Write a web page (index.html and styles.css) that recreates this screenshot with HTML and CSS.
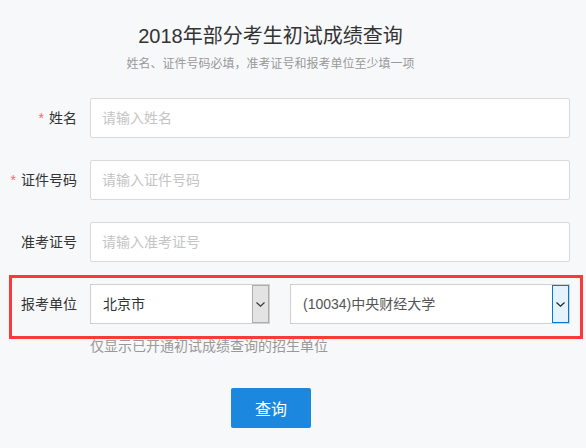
FILE: index.html
```html
<!DOCTYPE html>
<html lang="zh-CN">
<head>
  <meta charset="UTF-8">
  <meta name="viewport" content="width=device-width, initial-scale=1.0">
  <title>2018年部分考生初试成绩查询</title>
  <link rel="stylesheet" href="styles.css">
</head>
<body>
  <div class="page">
    <div class="head">
      <h1 class="title">2018年部分考生初试成绩查询</h1>
      <p class="subtitle">姓名、证件号码必填，准考证号和报考单位至少填一项</p>
    </div>

    <form class="form">
      <div class="row">
        <label class="label"><span class="req">*</span>姓名</label>
        <input class="field" type="text" placeholder="请输入姓名">
      </div>
      <div class="row">
        <label class="label"><span class="req">*</span>证件号码</label>
        <input class="field" type="text" placeholder="请输入证件号码">
      </div>
      <div class="row">
        <label class="label">准考证号</label>
        <input class="field" type="text" placeholder="请输入准考证号">
      </div>
      <!-- 报考单位：省市 + 院校 -->
      <div class="row row-unit">
        <label class="label">报考单位</label>
        <div class="unit">
          <div class="select select-city">
            <select><option>北京市</option></select>
            <span class="arrow">
              <svg width="9" height="5" viewBox="0 0 9 5"><polyline points="0.5,0.5 4.5,4.2 8.5,0.5" fill="none" stroke="#333" stroke-width="1.1"/></svg>
            </span>
          </div>
          <div class="select select-school">
            <select><option>(10034)中央财经大学</option></select>
            <span class="arrow arrow-active">
              <svg width="9" height="5" viewBox="0 0 9 5"><polyline points="0.5,0.5 4.5,4.2 8.5,0.5" fill="none" stroke="#222" stroke-width="1.2"/></svg>
            </span>
          </div>
        </div>
      </div>
      <p class="hint">仅显示已开通初试成绩查询的招生单位</p>
      <div class="actions">
        <button type="button" class="btn">查询</button>
      </div>
    </form>
  </div>
</body>
</html>
```

FILE: styles.css
```css
:root {
  --bg: #f7f8fa;
  --text: #333;
  --muted: #999;
  --border: #d9d9d9;
  --primary: #1b87df;
  --required: #f56c6c;
  --mark: #fa3a3a;
}
* { box-sizing: border-box; }
body {
  margin: 0;
  background: var(--bg);
  color: var(--text);
  font-family: "Liberation Sans", "Noto Sans CJK SC", sans-serif;
}
.page {
  width: 586px;
  height: 448px;
  overflow: hidden;
}
.head {
  width: 541px;
  padding-top: 22px;
  text-align: center;
}
.title {
  margin: 0;
  font-size: 20px;
  line-height: 28px;
  font-weight: normal;
  color: #333;
}
.subtitle {
  margin: 5px 0 0;
  font-size: 12px;
  line-height: 18px;
  color: var(--muted);
}
.form {
  margin-top: 25px;
}
.row {
  display: grid;
  grid-template-columns: 77px 480px;
  column-gap: 13px;
  height: 40px;
  margin-bottom: 22px;
  align-items: center;
}
.label {
  text-align: right;
  font-size: 14px;
  line-height: 20px;
  color: var(--text);
}
.req {
  color: var(--required);
  margin-right: 5px;
}
.field {
  height: 40px;
  padding: 0 11px;
  border: 1px solid var(--border);
  border-radius: 2px;
  background: #fff;
  font-family: inherit;
  font-size: 14px;
  color: var(--text);
  outline: none;
}
.field::placeholder { color: #c4c4c4; }

/* 红框标注 */
.row-unit {
  position: relative;
}
.row-unit::after {
  content: '';
  position: absolute;
  left: 9px;
  right: 3px;
  top: -9px;
  bottom: -15px;
  border: 3px solid var(--mark);
  pointer-events: none;
}
.unit {
  display: flex;
  gap: 20px;
}
.select {
  display: flex;
  height: 40px;
  border: 1px solid #d0d0d0;
  background: #fff;
}
.select-city { width: 180px; }
.select-school { width: 280px; }
.select select {
  flex: 1;
  min-width: 0;
  -webkit-appearance: none;
  appearance: none;
  border: 0;
  padding: 0 0 0 12px;
  background: transparent;
  font-family: inherit;
  font-size: 14px;
  color: #333;
  outline: none;
}
.select-school select { color: #555; }
.arrow {
  display: flex;
  align-items: center;
  justify-content: center;
  width: 17px;
  background: #e3e3e3;
  border: 1px solid #adadad;
}
.arrow-active {
  background: #e5f1fb;
  border-color: #0078d7;
}
.hint {
  margin: -10px 0 0 90px;
  font-size: 14px;
  line-height: 20px;
  color: var(--muted);
}
.actions {
  width: 542px;
  margin-top: 32px;
  text-align: center;
}
.btn {
  width: 80px;
  height: 40px;
  border: none;
  border-radius: 2px;
  background: var(--primary);
  color: #fff;
  font-family: inherit;
  font-size: 16px;
  cursor: pointer;
}
```
